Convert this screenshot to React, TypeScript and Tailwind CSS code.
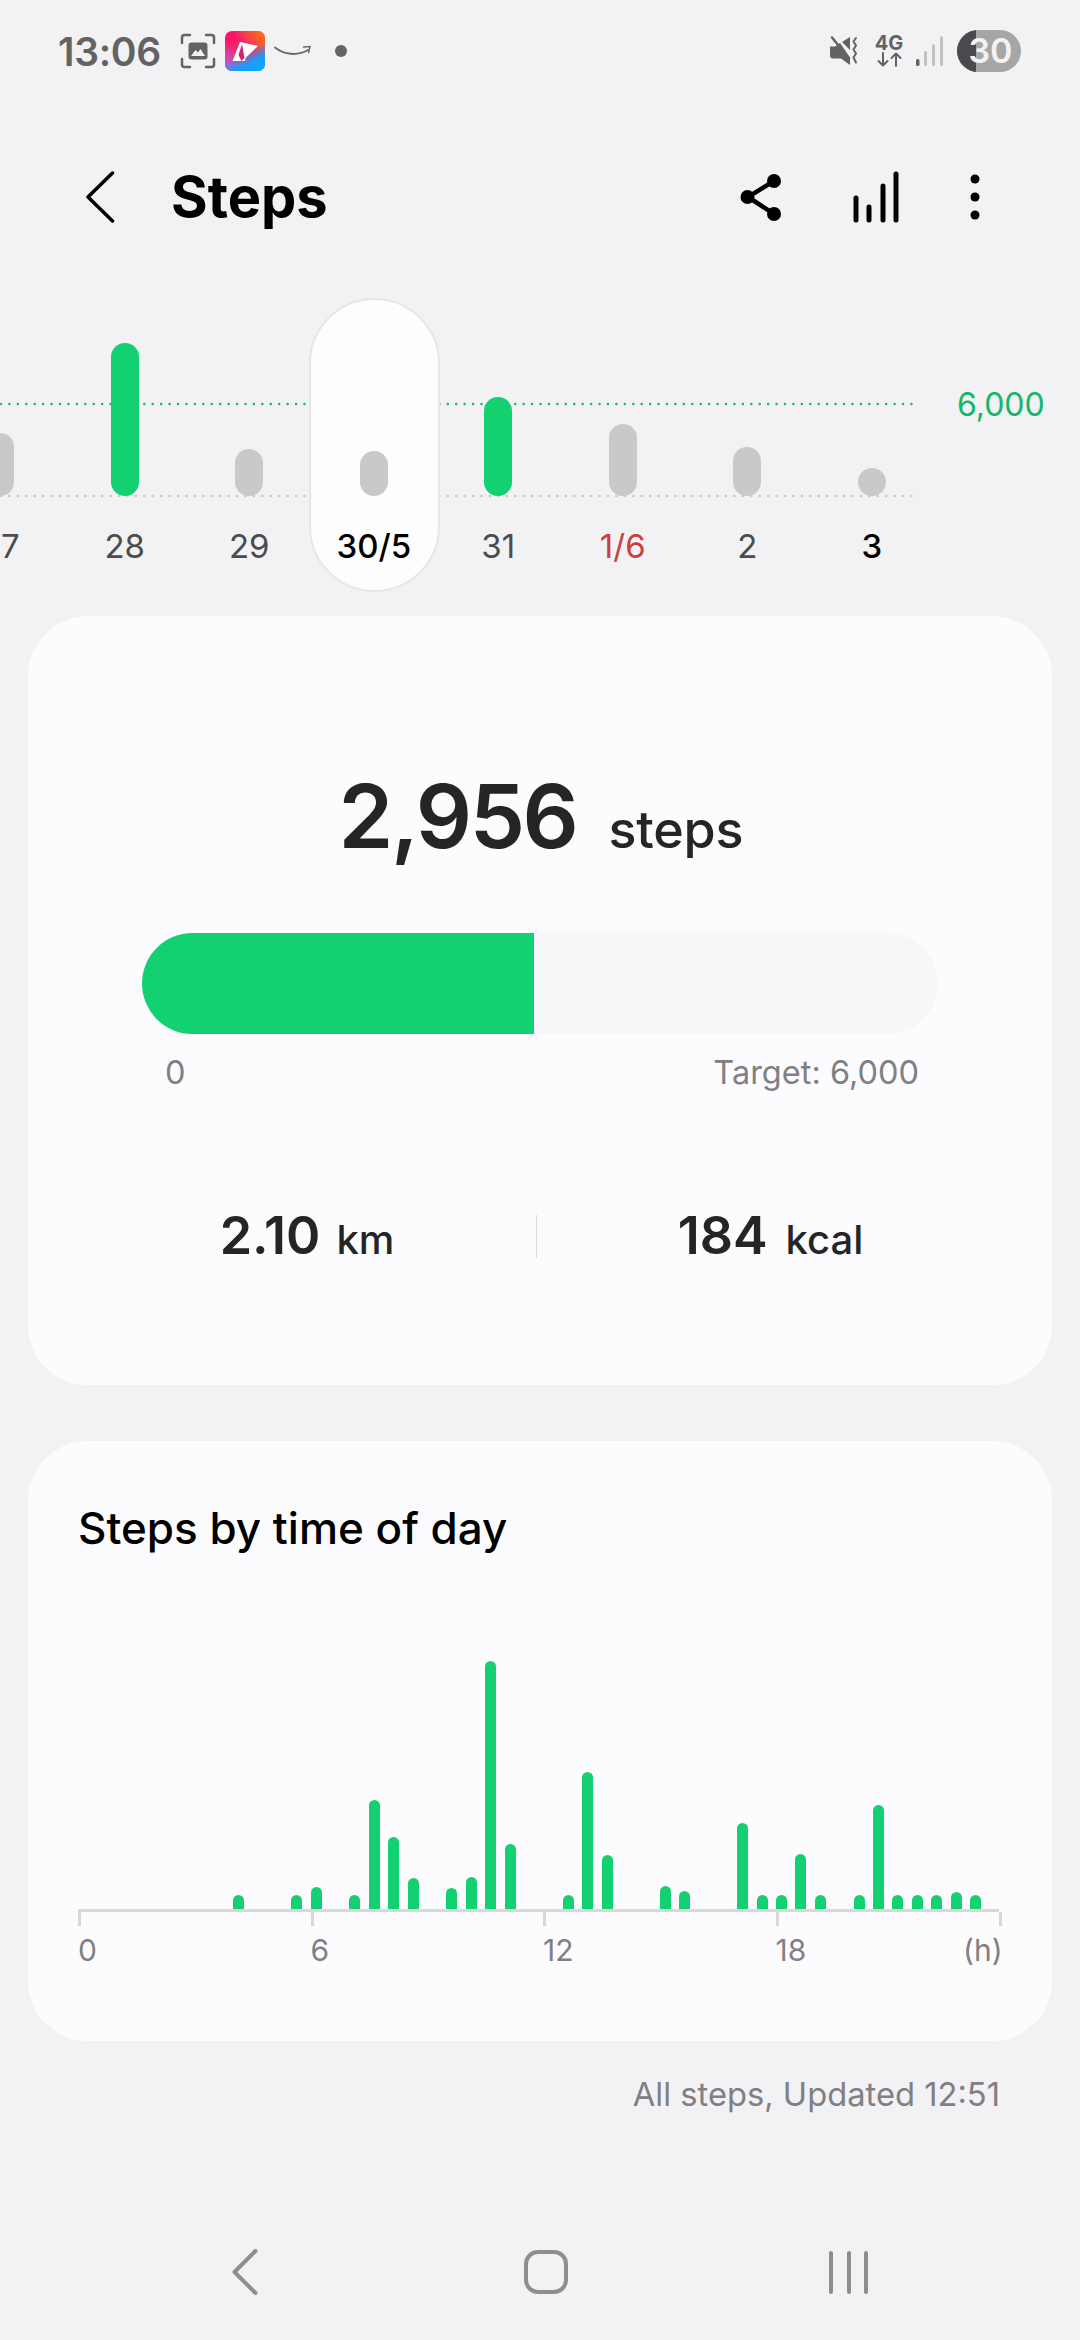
import React from 'react'

const days = [
  { label: '27', top: 433, color: 'gray' },
  { label: '28', top: 343, color: 'green' },
  { label: '29', top: 449, color: 'gray' },
  { label: '30/5', top: 451, color: 'gray', selected: true },
  { label: '31', top: 397, color: 'green' },
  { label: '1/6', top: 424, color: 'gray', red: true },
  { label: '2', top: 447, color: 'gray' },
  { label: '3', top: 468, color: 'gray', today: true },
]

// half hour slot -> top of the bar, in page pixels
const slots: Record<number, number> = {
  8: 1895, 11: 1895, 12: 1887, 14: 1895, 15: 1800, 16: 1837, 17: 1878, 19: 1888, 20: 1877,
  21: 1661, 22: 1844, 25: 1895, 26: 1772, 27: 1855, 30: 1886, 31: 1891, 34: 1823, 35: 1895,
  36: 1895, 37: 1854, 38: 1895, 40: 1895, 41: 1805, 42: 1895, 43: 1895, 44: 1895, 45: 1892, 46: 1895,
}

function StatusBar() {
  return (
    <div className="flex h-[100px] items-center justify-between pl-[58px] pr-[59px] pt-[2px]">
      <div className="flex items-center">
        <span className="w-[98px] text-[39px] leading-none font-semibold tracking-[-0.3px] text-[#636363]">13:06</span>
        <svg className="ml-[24px]" width="36" height="36" viewBox="0 0 36 36" fill="none">
          <path d="M2 10V4.5A2.5 2.5 0 0 1 4.5 2H10M26 2h5.5A2.5 2.5 0 0 1 34 4.5V10M34 26v5.5a2.5 2.5 0 0 1-2.5 2.5H26M10 34H4.5A2.5 2.5 0 0 1 2 31.5V26" stroke="#636363" strokeWidth="2.5" strokeLinecap="round" />
          <rect x="8.5" y="9.5" width="19" height="17" rx="3" fill="#636363" />
          <path d="M11 23l4.5-6 2.5 2.5 2.5-3.500 4.500 7z" fill="#f2f2f4" />
        </svg>
        <svg className="ml-[9px]" width="40" height="40" viewBox="0 0 40 40">
          <defs>
            <linearGradient id="app-a" x1="0" y1="0" x2="1" y2="1">
              <stop offset="0" stopColor="#ff0a6a" />
              <stop offset="0.5" stopColor="#f0306a" />
              <stop offset="1" stopColor="#ff2a50" />
            </linearGradient>
            <linearGradient id="app-b" x1="1" y1="0" x2="0.3" y2="0.7">
              <stop offset="0" stopColor="#ff7a00" />
              <stop offset="0.6" stopColor="#ff7a00" stopOpacity="0" />
            </linearGradient>
            <linearGradient id="app-c" x1="0.8" y1="1" x2="0.55" y2="0.5">
              <stop offset="0" stopColor="#0aa8ff" />
              <stop offset="0.45" stopColor="#1a9cff" />
              <stop offset="1" stopColor="#1a9cff" stopOpacity="0" />
            </linearGradient>
            <linearGradient id="app-d" x1="0" y1="1" x2="0.4" y2="0.55">
              <stop offset="0" stopColor="#a868e8" />
              <stop offset="1" stopColor="#a868e8" stopOpacity="0" />
            </linearGradient>
          </defs>
          <rect width="40" height="40" rx="7" fill="url(#app-a)" />
          <rect width="40" height="40" rx="7" fill="url(#app-b)" />
          <rect width="40" height="40" rx="7" fill="url(#app-d)" />
          <rect width="40" height="40" rx="7" fill="url(#app-c)" />
          <path d="M7.5 30L15 11l18 4-12.500 12L20 30z" fill="#fff" />
          <path d="M17 13l2.500 14-3 3-3-6z" fill="#d81f78" />
        </svg>
        <svg className="ml-[9px]" width="38" height="12" viewBox="0 0 38 12" fill="none">
          <path d="M1 2.500c9 7 22 9 33 2.500" stroke="#6a6a6a" strokeWidth="2" strokeLinecap="round" />
          <path d="M29.500 2l6.500-.5-1.500 6" stroke="#6a6a6a" strokeWidth="1.500" strokeLinecap="round" />
        </svg>
        <div className="ml-[23px] h-[12px] w-[12px] rounded-full bg-[#636363]" />
      </div>
      <div className="flex items-center">
        <svg width="30" height="30" viewBox="0 0 30 30" fill="none">
          <path d="M1 10.500h5l5-3.500 10 14.500V29l-9-6.500H4a3 3 0 0 1-3-3z" fill="#636363" />
          <path d="M13 6l8-5v13z" fill="#636363" />
          <path d="M3 1.500l17 21" stroke="#636363" strokeWidth="2.500" strokeLinecap="round" />
          <path d="M27 2l-2.500 3.500 2.500 4-2.500 4 2.500 4-2.500 4 2.500 5" stroke="#636363" strokeWidth="2" strokeLinecap="round" strokeLinejoin="round" />
        </svg>
        <div className="ml-[17px] flex w-[26px] flex-col items-center">
          <span className="text-[20px] leading-[17px] font-bold text-[#636363]">4G</span>
          <svg width="25" height="15" viewBox="0 0 25 15" fill="none" stroke="#636363" strokeWidth="2" strokeLinecap="round" strokeLinejoin="round">
            <path d="M6 1v12M1.500 9L6 13.500 10.500 9M19 14V2M14.500 6L19 1.500 23.500 6" />
          </svg>
        </div>
        <svg className="ml-[14px]" width="27" height="30" viewBox="0 0 27 30">
          <rect x="0" y="23" width="3.500" height="7" rx="1.500" fill="#636363" />
          <rect x="8" y="15" width="3" height="15" rx="1.500" fill="#c2c2c4" />
          <rect x="16" y="8" width="3" height="22" rx="1.500" fill="#c2c2c4" />
          <rect x="24" y="0" width="3" height="30" rx="1.500" fill="#c2c2c4" />
        </svg>
        <div className="relative ml-[14px] flex h-[42px] w-[64px] items-center justify-center overflow-hidden rounded-full bg-[#a6a6a6] pl-[3px]">
          <div className="absolute inset-y-0 left-0 w-[19px] bg-[#4a4a4a]" />
          <span className="relative text-[34px] leading-none font-semibold text-[#f2f2f4]">30</span>
        </div>
      </div>
    </div>
  )
}

function Header() {
  return (
    <div className="flex h-[194px] items-center pl-[85px] pr-[100px]">
      <svg width="30" height="52" viewBox="0 0 30 52" fill="none">
        <path d="M27.5 2L3 26l24.5 24" stroke="#000" strokeWidth="3.5" strokeLinecap="round" strokeLinejoin="round" />
      </svg>
      <h1 className="ml-[56px] text-[56px] leading-none font-bold text-black">Steps</h1>
      <div className="ml-auto flex items-center">
        <svg width="44" height="48" viewBox="0 0 44 48" fill="none">
          <path d="M34 8L8 24l26 17" stroke="#000" strokeWidth="4.5" />
          <circle cx="34" cy="8" r="7" fill="#000" />
          <circle cx="7.5" cy="24" r="7" fill="#000" />
          <circle cx="34" cy="41" r="7" fill="#000" />
        </svg>
        <svg className="ml-[69px]" width="46" height="52" viewBox="0 0 46 52" fill="none" stroke="#000" strokeWidth="5" strokeLinecap="round">
          <path d="M3 27v22M16 36v13M30 15v34M43 3v46" />
        </svg>
        <svg className="ml-[71px]" width="10" height="46" viewBox="0 0 10 46" fill="#000">
          <circle cx="5" cy="5" r="4.5" />
          <circle cx="5" cy="23" r="4.5" />
          <circle cx="5" cy="41" r="4.5" />
        </svg>
      </div>
    </div>
  )
}

function WeekStrip() {
  return (
    <div className="relative h-[294px] overflow-hidden">
      <svg className="absolute left-0 top-[104px]" width="916" height="98" fill="none">
        <line x1="1" y1="2" x2="914" y2="2" stroke="#12b76a" strokeWidth="2.5" strokeLinecap="round" strokeDasharray="0 8.43" />
        <line x1="1" y1="94" x2="914" y2="94" stroke="#c6c6c8" strokeWidth="2.5" strokeLinecap="round" strokeDasharray="0 8.43" />
      </svg>
      <div className="relative ml-[-62px] flex">
        {days.map((d) => (
          <div key={d.label} className="relative flex h-[294px] w-[124.5px] shrink-0 flex-col items-center">
            {d.selected && (
              <div className="absolute inset-y-0 left-[-3px] right-[-3.5px] rounded-full border-2 border-[#e6e6e8] bg-[#fdfdfe]" />
            )}
            <div className="relative mt-[198px] flex h-0 w-full flex-col items-center justify-end">
              <div
                className={`w-[28px] shrink-0 rounded-full ${d.color === 'green' ? 'bg-[#13d171]' : 'bg-[#c9c9cb]'}`}
                style={{ height: 496 - d.top }}
              />
            </div>
            <span
              className={`relative mt-[29px] text-[33px] leading-[42px] ${
                d.selected ? 'font-medium text-black' : d.red ? 'text-[#c9413a]' : d.today ? 'font-medium text-black' : 'text-[#4c4c4c]'
              }`}
            >
              {d.label}
            </span>
          </div>
        ))}
      </div>
      <span className="absolute left-[957px] top-[87px] text-[32px] leading-[40px] text-[#12b76a]">6,000</span>
    </div>
  )
}

function SummaryCard() {
  return (
    <section className="mx-[28px] mt-[24px] h-[769px] rounded-[60px] bg-[#fcfcfe] pt-[150px]">
      <div className="flex items-baseline justify-center pl-[2px]">
        <span className="text-[88px] leading-[100px] font-semibold tracking-[-2.4px] text-[#252528]">2,956</span>
        <span className="ml-[32px] text-[52px] leading-none font-medium tracking-[-0.2px] text-[#252528]">steps</span>
      </div>
      <div className="mx-[114px] mt-[67px] h-[101px] overflow-hidden rounded-full bg-[#f7f7f9]">
        <div className="h-full w-[392px] bg-[#13d171]" />
      </div>
      <div className="ml-[137px] mr-[133px] mt-[19px] flex justify-between text-[32.5px] leading-[40px] text-[#808084]">
        <span>0</span>
        <span>Target: 6,000</span>
      </div>
      <div className="mt-[113px] flex items-center text-[#252528]">
        <div className="flex w-[508px] items-baseline justify-center pl-[50px]">
          <span className="text-[52px] leading-[60px] font-semibold">2.10</span>
          <span className="ml-[16px] text-[40px] leading-none font-medium">km</span>
        </div>
        <div className="h-[43px] w-px bg-[#dcdcde]" />
        <div className="flex w-[515px] items-baseline justify-center pr-[48px]">
          <span className="text-[52px] leading-[60px] font-semibold">184</span>
          <span className="ml-[18px] text-[40px] leading-none font-medium">kcal</span>
        </div>
      </div>
    </section>
  )
}

function TimeChart() {
  const hours = Array.from({ length: 47 }, (_, i) => i)
  return (
    <section className="mx-[28px] mt-[56px] h-[600px] rounded-[60px] bg-[#fcfcfe] pl-[50px] pt-[57px]">
      <h2 className="text-[44px] leading-[60px] font-medium text-black">Steps by time of day</h2>
      <div className="mt-[103px] flex h-[248px] items-end">
        {hours.map((i) => (
          <div key={i} className="flex w-[19.4px] shrink-0 items-end">
            {slots[i] && (
              <div className="w-[11px] rounded-t-full bg-[#13d171]" style={{ height: 1909 - slots[i] }} />
            )}
          </div>
        ))}
      </div>
      <div className="h-[3px] w-[921px] bg-[#d8d8d8]" />
      <div className="flex w-[921px]">
        {[0, 6, 12, 18].map((h) => (
          <div key={h} className="h-[14px] w-[232.5px] shrink-0 border-l-[3px] border-[#d8d8d8]" />
        ))}
        <div className="ml-[-9px] h-[14px] w-[3px] shrink-0 bg-[#d8d8d8]" />
      </div>
      <div className="mt-[4px] flex w-[924px] text-[30px] leading-[40px] text-[#808084]">
        {[0, 6, 12, 18].map((h) => (
          <span key={h} className="w-[232.5px] shrink-0">{h}</span>
        ))}
        <span className="ml-[-45px] shrink-0">(h)</span>
      </div>
    </section>
  )
}

function NavBar() {
  return (
    <div className="mt-[133px] flex h-[46px] items-center pl-[232px]">
      <svg width="26" height="46" viewBox="0 0 26 46" fill="none">
        <path d="M23.5 2L2.5 23l21 21" stroke="#8e8e8e" strokeWidth="4" strokeLinecap="round" strokeLinejoin="round" />
      </svg>
      <div className="ml-[266px] h-[44px] w-[44px] rounded-[14px] border-[4px] border-[#8e8e8e]" />
      <div className="ml-[261px] flex gap-[13.5px]">
        <div className="h-[43px] w-[4px] rounded-full bg-[#8e8e8e]" />
        <div className="h-[43px] w-[4px] rounded-full bg-[#8e8e8e]" />
        <div className="h-[43px] w-[4px] rounded-full bg-[#8e8e8e]" />
      </div>
    </div>
  )
}

export default function App() {
  return (
    <div className="h-[2340px] w-[1080px] overflow-hidden bg-[#f2f2f4] font-['Inter',sans-serif]">
      <StatusBar />
      <Header />
      <div className="mt-[4px]">
        <WeekStrip />
      </div>
      <SummaryCard />
      <TimeChart />
      <p className="mr-[80px] mt-[31px] text-right text-[32.7px] leading-[44px] text-[#808084]">All steps, Updated 12:51</p>
      <NavBar />
    </div>
  )
}
